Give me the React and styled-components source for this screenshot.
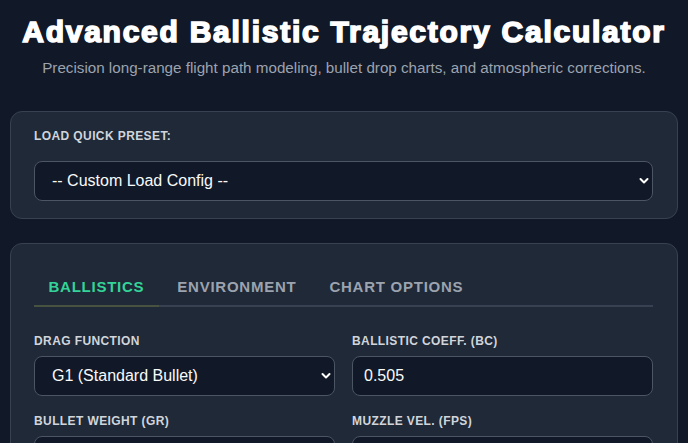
import React from "react";
import styled, { createGlobalStyle } from "styled-components";

const GlobalStyle = createGlobalStyle`
  html, body { margin: 0; padding: 0; background: #111827; }
  body { font-family: "Liberation Sans", Arial, sans-serif; color: #f9fafb; }
  * { box-sizing: border-box; }
`;

const Page = styled.div`
  padding: 15px 10px 0;
`;

const Header = styled.header`
  text-align: center;
  margin-bottom: 34px;
`;

const Title = styled.h1`
  margin: 0;
  font-size: 30px;
  line-height: 34px;
  font-weight: 700;
  letter-spacing: 1.75px;
  color: #ffffff;
  -webkit-text-stroke: 1.6px #ffffff;
`;

const Subtitle = styled.p`
  margin: 10px 0 0;
  font-size: 15.2px;
  line-height: 17.5px;
  color: #9ca3af;
`;

const Card = styled.section`
  background: #1f2937;
  border: 1px solid #374151;
  border-radius: 12px;
  padding: ${(p) => p.$pad || "24px 24px 24px 23px"};
  margin-bottom: 24px;
`;

const Label = styled.label`
  display: block;
  font-size: 12px;
  line-height: 14px;
  font-weight: 700;
  letter-spacing: 0.4px;
  text-transform: uppercase;
  color: #d1d5db;
  margin-bottom: ${(p) => p.$mb || "8px"};
`;

const SelectWrap = styled.div`
  position: relative;
`;

const Select = styled.select`
  appearance: none;
  -webkit-appearance: none;
  width: 100%;
  height: 40px;
  padding: 0 24px 0 17px;
  background: #111827;
  border: 1px solid #4b5563;
  border-radius: 8px;
  color: #f9fafb;
  font-family: "Liberation Sans", Arial, sans-serif;
  font-size: 16px;
  outline: none;
`;

const Chevron = styled.svg`
  position: absolute;
  right: 4px;
  top: 50%;
  width: 10px;
  height: 10px;
  margin-top: -5px;
  pointer-events: none;
`;

const Input = styled.input`
  width: 100%;
  height: 40px;
  padding: 0 11px;
  background: #111827;
  border: 1px solid #4b5563;
  border-radius: 8px;
  color: #f9fafb;
  font-family: "Liberation Sans", Arial, sans-serif;
  font-size: 16px;
  outline: none;
`;

const Tabs = styled.div`
  display: flex;
  gap: 4px;
  border-bottom: 2px solid #374151;
  margin-bottom: 27px;
`;

const Tab = styled.button`
  background: none;
  border: none;
  border-bottom: 2px solid ${(p) => (p.$active ? "#475240" : "transparent")};
  margin-bottom: -2px;
  padding: 10px 14.5px;
  font-family: "Liberation Sans", Arial, sans-serif;
  font-size: 15px;
  line-height: 17px;
  font-weight: 700;
  letter-spacing: 0.75px;
  text-transform: uppercase;
  color: ${(p) => (p.$active ? "#34d399" : "#9ca3af")};
  cursor: pointer;
`;

const FormGrid = styled.div`
  display: grid;
  grid-template-columns: 1fr 1fr;
  column-gap: 17px;
  row-gap: 18px;
`;

const Field = styled.div``;

const ChevronIcon = () => (
  <Chevron viewBox="0 0 10 10">
    <path d="M1.5 3 L5 6.5 L8.5 3" fill="none" stroke="#ffffff" strokeWidth="2" strokeLinecap="round" strokeLinejoin="round" />
  </Chevron>
);

const SelectField = ({ children, defaultValue }) => (
  <SelectWrap>
    <Select defaultValue={defaultValue}>{children}</Select>
    <ChevronIcon />
  </SelectWrap>
);

export default function App() {
  return (
    <>
      <GlobalStyle />
      <Page>
        <Header>
          <Title>Advanced Ballistic Trajectory Calculator</Title>
          <Subtitle>
            Precision long-range flight path modeling, bullet drop charts, and atmospheric corrections.
          </Subtitle>
        </Header>

        <Card $pad="17px 24px 17px 23px">
          <Label $mb="18px">Load Quick Preset:</Label>
          <SelectField defaultValue="custom">
            <option value="custom">-- Custom Load Config --</option>
            <option value="308">.308 Win 175gr SMK</option>
            <option value="65">6.5 Creedmoor 140gr ELD-M</option>
          </SelectField>
        </Card>

        <Card>
          <Tabs>
            <Tab $active>Ballistics</Tab>
            <Tab>Environment</Tab>
            <Tab>Chart Options</Tab>
          </Tabs>
          <FormGrid>
            <Field>
              <Label>Drag Function</Label>
              <SelectField defaultValue="g1">
                <option value="g1">G1 (Standard Bullet)</option>
                <option value="g7">G7 (Boat Tail)</option>
              </SelectField>
            </Field>
            <Field>
              <Label>Ballistic Coeff. (BC)</Label>
              <Input type="text" defaultValue="0.505" />
            </Field>
            <Field>
              <Label>Bullet Weight (gr)</Label>
              <Input type="text" defaultValue="175" />
            </Field>
            <Field>
              <Label>Muzzle Vel. (fps)</Label>
              <Input type="text" defaultValue="2600" />
            </Field>
          </FormGrid>
        </Card>
      </Page>
    </>
  );
}
